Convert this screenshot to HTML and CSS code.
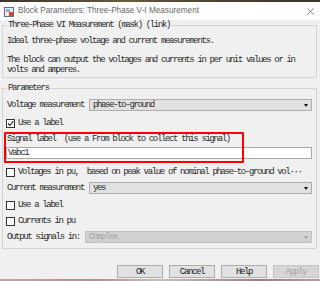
FILE: index.html
```html
<!DOCTYPE html>
<html lang="en">
<head>
    <meta charset="UTF-8">
    <meta name="viewport" content="width=device-width, initial-scale=1.0">
    <title>Block Parameters: Three-Phase V-I Measurement</title>
    <link rel="stylesheet" href="styles.css">
</head>
<body>
    <div class="topstrip"></div>

    <div class="titlebar">
        <svg class="app-icon" viewBox="0 0 10 10">
            <rect x="0.5" y="0.5" width="9" height="9" fill="#e4ecf5" stroke="#5d6f88"/>
            <rect x="2" y="2" width="4" height="3" fill="#8fb2d8"/>
            <rect x="5" y="5" width="4" height="4" fill="#d9472b"/>
        </svg>
        <span class="title">Block Parameters: Three-Phase V-I Measurement</span>
        <svg class="close" viewBox="0 0 8 8">
            <path d="M0.5 0.5 L7.5 7.5 M7.5 0.5 L0.5 7.5" stroke="#666" stroke-width="0.9"/>
        </svg>
    </div>

    <fieldset class="group desc">
        <legend>Three-Phase VI Measurement (mask) (link)</legend>
        <p>Ideal three-phase voltage and current measurements.</p>
        <p>The block can output the voltages and currents in per unit values or in<br>volts and amperes.</p>
    </fieldset>

    <fieldset class="group params">
        <legend>Parameters</legend>

        <div class="field first">
            <span class="label">Voltage measurement</span>
            <div class="select">phase-to-ground<span class="arrow"></span></div>
        </div>

        <div class="check gap7">
            <span class="box checked">
                <svg viewBox="0 0 7 7"><path d="M1 3.5 L3 5.5 L6.3 1.2" fill="none" stroke="#222" stroke-width="1.1"/></svg>
            </span>
            <span>Use a label</span>
        </div>

        <div class="signal">
            <div class="signal-label">Signal label  (use a From block to collect this signal)</div>
            <div class="textbox">Vabc1</div>
        </div>

        <div class="check gap8">
            <span class="box"></span>
            <span>Voltages in pu,  based on peak value of nominal phase-to-ground vol···</span>
        </div>

        <div class="field gap5">
            <span class="label">Current measurement</span>
            <div class="select">yes<span class="arrow"></span></div>
        </div>

        <div class="check gap6">
            <span class="box"></span>
            <span>Use a label</span>
        </div>

        <div class="check gap6">
            <span class="box"></span>
            <span>Currents in pu</span>
        </div>

        <div class="field gap5">
            <span class="label">Output signals in:</span>
            <div class="select disabled">Complex<span class="arrow"></span></div>
        </div>
    </fieldset>

    <div class="buttons">
        <button class="btn">OK</button>
        <button class="btn">Cancel</button>
        <button class="btn">Help</button>
        <button class="btn" disabled>Apply</button>
    </div>

    <div class="bottomstrip"></div>
</body>
</html>
```

FILE: styles.css
```css
* {
    box-sizing: border-box;
}

body {
    margin: 0;
    width: 320px;
    height: 281px;
    overflow: hidden;
    background-color: #f0f0f0;
    font-family: "Liberation Mono", monospace;
    font-size: 9px;
    letter-spacing: -1.35px;
    line-height: 10px;
    color: #2a2a2a;
}

.topstrip {
    height: 2px;
    background: linear-gradient(90deg, #3b362c, #6a5a40 40%, #4a4033 70%, #3b362c);
}

.titlebar {
    height: 18px;
    background-color: #fff;
    display: flex;
    align-items: center;
    padding: 0 6px 0 4px;
    font-family: "Liberation Sans", sans-serif;
    font-size: 8.2px;
    letter-spacing: 0;
    color: #666;
}

.app-icon {
    width: 10px;
    height: 10px;
    margin-right: 4px;
    margin-top: 1px;
}

.title {
    flex: 1;
}

.close {
    width: 7px;
    height: 7px;
}

/* group boxes */
.group {
    margin: 0 3px 0 2px;
    padding: 0 4px;
    border: 1px solid #d5d5d5;
    min-width: 0;
}

.group legend {
    padding: 0 1px;
    line-height: 10px;
}

.desc {
    padding-top: 6px;
    padding-bottom: 2px;
}

.desc p {
    margin: 0;
}

.desc p + p {
    margin-top: 9px;
}

.params {
    margin-top: 5px;
    padding-top: 6px;
    padding-bottom: 5px;
}

/* rows */
.field {
    display: flex;
    align-items: center;
    height: 12px;
}

.label {
    white-space: pre;
}

.select {
    flex: 1;
    height: 12px;
    margin-left: 5px;
    padding-left: 3px;
    display: flex;
    align-items: center;
    border: 1px solid #adadad;
    background-color: #e1e1e1;
}

.arrow {
    margin-left: auto;
    margin-right: 3px;
    width: 0;
    height: 0;
    border-left: 2.5px solid transparent;
    border-right: 2.5px solid transparent;
    border-top: 3px solid #111;
}

.select.disabled {
    background-color: #d2d2d2;
    border-color: #c2c2c2;
    color: #a6a6a6;
}

.select.disabled .arrow {
    border-top-color: #a0a0a0;
}

.check {
    display: flex;
    align-items: center;
    height: 10px;
    white-space: pre;
}

.box {
    width: 9px;
    height: 9px;
    margin-left: -1px;
    margin-right: 3px;
    border: 1px solid #333;
    background-color: #fff;
    display: flex;
    align-items: center;
    justify-content: center;
}

.box svg {
    width: 7px;
    height: 7px;
}

.gap5 { margin-top: 5px; }
.gap6 { margin-top: 6px; }
.gap7 { margin-top: 7px; }
.gap8 { margin-top: 8px; }

/* signal label, marked with a red annotation box */
.signal {
    position: relative;
    margin-top: 6px;
}

.signal::after {
    content: "";
    position: absolute;
    left: -3px;
    top: -2px;
    width: 236px;
    height: 27px;
    border: 2px solid #f00;
    border-radius: 1px;
}

.signal-label {
    white-space: pre;
    height: 10px;
}

.textbox {
    margin-top: 3px;
    margin-left: -1px;
    height: 12px;
    padding-left: 1px;
    display: flex;
    align-items: center;
    background-color: #fff;
    border: 1px solid #a9a9a9;
}

/* buttons */
.buttons {
    display: flex;
    justify-content: flex-end;
    gap: 6px;
    margin-top: 16px;
    margin-bottom: 1px;
    padding-right: 1px;
}

.btn {
    width: 46px;
    height: 13px;
    padding: 0;
    font: inherit;
    letter-spacing: inherit;
    color: #222;
    border: 1px solid #adadad;
    background-color: #e1e1e1;
}

.btn:disabled {
    color: #a8a8a8;
    border-color: #c6c6c6;
    background-color: #d6d6d6;
}

.bottomstrip {
    height: 2px;
    background: linear-gradient(90deg, #c9a0a0, #b98c8f 30%, #c8c0b4 50%, #9c7f86 80%, #b59a9a);
}
```
